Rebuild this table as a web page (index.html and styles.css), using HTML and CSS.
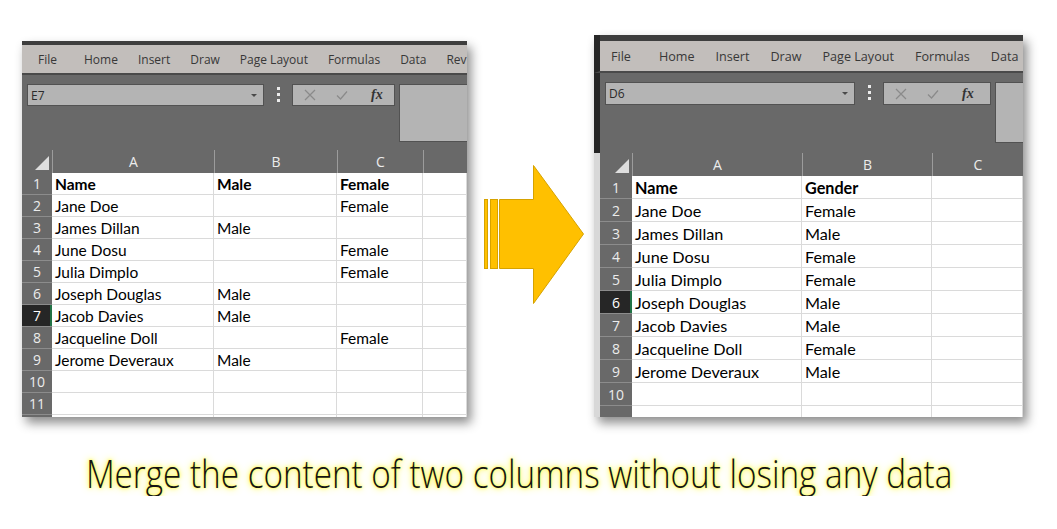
FILE: index.html
```html
<!DOCTYPE html>
<html lang="en">
<head>
  <meta charset="UTF-8">
  <title>Merge two columns</title>
  <link rel="stylesheet" href="styles.css">
</head>
<body>
  <div class="stage">

    <!-- Before: gender split over two columns -->
    <div class="sheet sheet-before">
      <div class="titlebar"></div>
      <div class="tabs">
        <span>File</span><span>Home</span><span>Insert</span><span>Draw</span><span>Page Layout</span><span>Formulas</span><span>Data</span><span>Rev</span>
      </div>
      <div class="toolbar">
        <div class="namebox"><span>E7</span><span class="caret"></span></div>
        <div class="dots"><i></i><i></i><i></i></div>
        <div class="fx-buttons">
          <svg class="ico" viewBox="0 0 12 12"><path d="M1 1L11 11M11 1L1 11"/></svg>
          <svg class="ico" viewBox="0 0 12 12"><path d="M1 6.5L4.5 10L11 2.5"/></svg>
          <span class="fx">fx</span>
        </div>
        <div class="formula-bar"></div>
      </div>
      <div class="grid">
        <div class="corner"><span class="tri"></span></div>
        <div class="ch">A</div><div class="ch">B</div><div class="ch">C</div><div class="ch"></div>

        <div class="rh">1</div><div class="c b">Name</div><div class="c b">Male</div><div class="c b">Female</div><div class="c"></div>
        <div class="rh">2</div><div class="c">Jane Doe</div><div class="c"></div><div class="c">Female</div><div class="c"></div>
        <div class="rh">3</div><div class="c">James Dillan</div><div class="c">Male</div><div class="c"></div><div class="c"></div>
        <div class="rh">4</div><div class="c">June Dosu</div><div class="c"></div><div class="c">Female</div><div class="c"></div>
        <div class="rh">5</div><div class="c">Julia Dimplo</div><div class="c"></div><div class="c">Female</div><div class="c"></div>
        <div class="rh">6</div><div class="c">Joseph Douglas</div><div class="c">Male</div><div class="c"></div><div class="c"></div>
        <div class="rh sel">7</div><div class="c">Jacob Davies</div><div class="c">Male</div><div class="c"></div><div class="c"></div>
        <div class="rh">8</div><div class="c">Jacqueline Doll</div><div class="c"></div><div class="c">Female</div><div class="c"></div>
        <div class="rh">9</div><div class="c">Jerome Deveraux</div><div class="c">Male</div><div class="c"></div><div class="c"></div>
        <div class="rh">10</div><div class="c"></div><div class="c"></div><div class="c"></div><div class="c"></div>
        <div class="rh">11</div><div class="c"></div><div class="c"></div><div class="c"></div><div class="c"></div>
        <div class="rh"></div><div class="c"></div><div class="c"></div><div class="c"></div><div class="c"></div>
      </div>
    </div>

    <svg class="arrow" viewBox="0 0 100 139" width="100" height="139">
      <rect x="0.5" y="34.5" width="3" height="69"/>
      <rect x="6.5" y="34.5" width="7" height="69"/>
      <polygon points="15.5,34.5 49.5,34.5 49.5,0.5 99.5,69 49.5,138.5 49.5,103.5 15.5,103.5"/>
    </svg>

    <!-- After: one merged Gender column -->
    <div class="sheet sheet-after">
      <div class="titlebar"></div>
      <div class="tabs">
        <span>File</span><span>Home</span><span>Insert</span><span>Draw</span><span>Page Layout</span><span>Formulas</span><span>Data</span>
      </div>
      <div class="toolbar">
        <div class="namebox"><span>D6</span><span class="caret"></span></div>
        <div class="dots"><i></i><i></i><i></i></div>
        <div class="fx-buttons">
          <svg class="ico" viewBox="0 0 12 12"><path d="M1 1L11 11M11 1L1 11"/></svg>
          <svg class="ico" viewBox="0 0 12 12"><path d="M1 6.5L4.5 10L11 2.5"/></svg>
          <span class="fx">fx</span>
        </div>
        <div class="formula-bar"></div>
      </div>
      <div class="grid">
        <div class="corner"><span class="tri"></span></div>
        <div class="ch">A</div><div class="ch">B</div><div class="ch">C</div>

        <div class="rh">1</div><div class="c b">Name</div><div class="c b">Gender</div><div class="c"></div>
        <div class="rh">2</div><div class="c">Jane Doe</div><div class="c">Female</div><div class="c"></div>
        <div class="rh">3</div><div class="c">James Dillan</div><div class="c">Male</div><div class="c"></div>
        <div class="rh">4</div><div class="c">June Dosu</div><div class="c">Female</div><div class="c"></div>
        <div class="rh">5</div><div class="c">Julia Dimplo</div><div class="c">Female</div><div class="c"></div>
        <div class="rh sel">6</div><div class="c">Joseph Douglas</div><div class="c">Male</div><div class="c"></div>
        <div class="rh">7</div><div class="c">Jacob Davies</div><div class="c">Male</div><div class="c"></div>
        <div class="rh">8</div><div class="c">Jacqueline Doll</div><div class="c">Female</div><div class="c"></div>
        <div class="rh">9</div><div class="c">Jerome Deveraux</div><div class="c">Male</div><div class="c"></div>
        <div class="rh">10</div><div class="c"></div><div class="c"></div><div class="c"></div>
        <div class="rh"></div><div class="c"></div><div class="c"></div><div class="c"></div>
      </div>
    </div>

  </div>

  <p class="caption"><span>Merge the content of two columns without losing any data</span></p>
</body>
</html>
```

FILE: styles.css
```css
body {
  margin: 0;
  background: #ffffff;
  font-family: "Open Sans", sans-serif;
}

.stage {
  display: flex;
  align-items: flex-start;
  height: 417px;
}

/* Excel window */
.sheet {
  flex: none;
  overflow: hidden;
  background: #696969;
  box-shadow: 4px 6px 10px rgba(0, 0, 0, 0.45);
}

.sheet-before {
  --top-h: 4px;
  --tab-h: 28px;
  --tab-size: 12px;
  --tab-pad: 16px;
  --tab-gap: 20px;
  --file-gap: 27px;
  --tool-h: 75px;
  --box-h: 22px;
  --name-w: 237px;
  --btn-w: 103px;
  --bar-h: 58px;
  --hdr-h: 23px;
  --row-h: 22px;
  --cell-size: 15.5px;
  --cols: 30px 162px 123px 86px 1fr;
  width: 445px;
  height: 376px;
  margin: 41px 0 0 22px;
}

.sheet-after {
  --top-h: 6px;
  --tab-h: 30px;
  --tab-size: 12.6px;
  --tab-pad: 17px;
  --tab-gap: 21px;
  --file-gap: 28px;
  --tool-h: 80px;
  --box-h: 23px;
  --name-w: 250px;
  --btn-w: 108px;
  --bar-h: 61px;
  --hdr-h: 23px;
  --row-h: 23px;
  --cell-size: 16.2px;
  --cols: 32px 170px 130px 1fr;
  width: 429px;
  height: 382px;
  margin-top: 35px;
}

.titlebar {
  height: var(--top-h);
  background: #3e3e3e;
}

.tabs {
  height: var(--tab-h);
  display: flex;
  align-items: center;
  padding-left: var(--tab-pad);
  background: #c2bebb;
  border-bottom: 2px solid #4a4a4a;
  font-size: var(--tab-size);
  color: #383838;
  white-space: nowrap;
}

.tabs span {
  margin-right: var(--tab-gap);
}

.tabs span:first-child {
  margin-right: var(--file-gap);
}

.sheet-after .titlebar,
.sheet-after .tabs,
.sheet-after .toolbar {
  border-left: 6px solid #262626;
}

.sheet-after .tabs {
  padding-left: 11px;
}

.toolbar {
  box-sizing: border-box;
  height: var(--tool-h);
  display: flex;
  align-items: flex-start;
  padding: 9px 0 0 5px;
}

.namebox {
  box-sizing: border-box;
  width: var(--name-w);
  height: var(--box-h);
  display: flex;
  align-items: center;
  justify-content: space-between;
  padding: 0 6px 0 3px;
  background: #b4b4b4;
  border: 1px solid #525252;
  font-size: 12px;
  color: #2b2b2b;
}

.caret {
  border-left: 3px solid transparent;
  border-right: 3px solid transparent;
  border-top: 3px solid #4a4a4a;
}

.dots {
  display: flex;
  flex-direction: column;
  gap: 3px;
  margin: 3px 0 0 13px;
}

.dots i {
  width: 3px;
  height: 3px;
  background: #ececec;
}

.fx-buttons {
  box-sizing: border-box;
  width: var(--btn-w);
  height: var(--box-h);
  display: flex;
  align-items: center;
  gap: 20px;
  margin-left: 12px;
  padding-left: 11px;
  background: #b4b4b4;
  border: 1px solid #525252;
}

.ico {
  width: 12px;
  height: 12px;
  fill: none;
  stroke: #8a8a8a;
  stroke-width: 1.2;
}

.fx {
  margin-left: 3px;
  font-family: "Liberation Serif", serif;
  font-style: italic;
  font-weight: bold;
  font-size: 14px;
  color: #333333;
}

.formula-bar {
  box-sizing: border-box;
  flex: 1;
  height: var(--bar-h);
  margin-left: 4px;
  background: #b4b4b4;
  border: 1px solid #525252;
  border-right: none;
}

/* worksheet grid */
.grid {
  display: grid;
  grid-template-columns: var(--cols);
  grid-template-rows: var(--hdr-h);
  grid-auto-rows: var(--row-h);
  background: #ffffff;
  font-family: Lato, "Open Sans", sans-serif;
  font-size: var(--cell-size);
}

.sheet-after .grid {
  border-left: 6px solid #d8d8d8;
}

.corner {
  display: flex;
  align-items: flex-end;
  justify-content: flex-end;
  background: #696969;
  padding: 0 3px 3px 0;
}

.tri {
  width: 0;
  height: 0;
  border-left: 14px solid transparent;
  border-bottom: 14px solid #dedede;
}

.ch {
  display: flex;
  align-items: center;
  justify-content: center;
  background: #696969;
  border-left: 1px solid #9c9c9c;
  font-family: "Open Sans", sans-serif;
  font-size: 14px;
  color: #ececec;
}

.rh {
  display: flex;
  align-items: center;
  justify-content: center;
  background: #696969;
  border-bottom: 1px solid #8c8c8c;
  font-family: "Open Sans", sans-serif;
  font-size: 14px;
  color: #ececec;
}

.rh.sel {
  background: #262626;
  color: #ffffff;
  box-shadow: inset -2px 0 #217346;
}

.c {
  display: flex;
  align-items: center;
  padding-left: 3px;
  border-right: 1px solid #dadada;
  border-bottom: 1px solid #dadada;
  white-space: nowrap;
  overflow: hidden;
  color: #000000;
}

.c.b {
  font-weight: bold;
}

/* arrow between the two windows */
.arrow {
  flex: none;
  margin: 165px 10px 0 17px;
  fill: #ffc000;
  stroke: #d6a200;
  stroke-width: 1;
}

.caption {
  margin: 33px 0 0;
  text-align: center;
  padding-right: 19px;
}

.caption span {
  display: inline-block;
  transform: scaleX(0.875);
  font-family: "Open Sans", sans-serif;
  font-weight: 300;
  font-size: 38px;
  line-height: 46px;
  color: #141414;
  white-space: nowrap;
  text-shadow: 0 0 2px #ffff4d, 0 0 4px #ffff66, 0 0 7px #fff870, 0 0 10px #fff58a;
}
```
